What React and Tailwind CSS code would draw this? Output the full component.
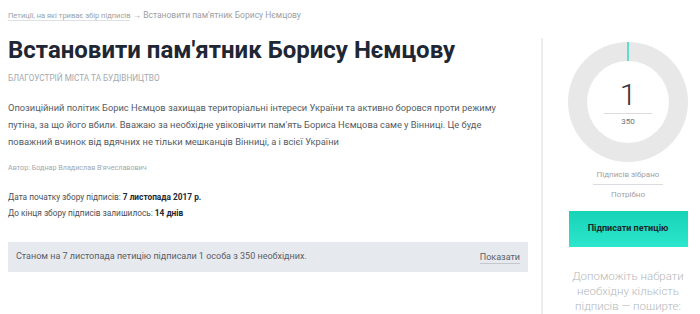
export default function App() {
  return (
    <div className="flex h-[314px] w-[700px] overflow-hidden bg-white font-['Roboto',sans-serif]">
      <main className="w-[541px] shrink-0 pl-2 pr-[4px]">
        <nav className="pt-[10px] text-[8px] leading-[11px] text-[#9aa0a6]">
          <span className="border-b border-[#dde0e4] text-[7.5px]">Петиції, на які триває збір підписів</span>
          <span className="text-[8.5px]"> → Встановити пам'ятник Борису Нємцову</span>
        </nav>

        <h1 className="mt-[14px] text-[24px] font-bold leading-[30px] text-[#1e2733]">
          Встановити пам'ятник Борису Нємцову
        </h1>

        <p className="mt-[8px] text-[8.2px] uppercase leading-[11px] text-[#a4a8ad]">
          Благоустрій міста та будівництво
        </p>

        <p className="mt-[15px] max-w-[515px] text-[9.3px] leading-[17px] text-[#555b62]">
          Опозиційний політик Борис Нємцов захищав територіальні інтереси України та активно боровся проти режиму
          путіна, за що його вбили. Вважаю за необхідне увіковічити пам'ять Бориса Нємцова саме у Вінниці. Це буде
          поважний вчинок від вдячних не тільки мешканців Вінниці, а і всієї України
        </p>

        <p className="mt-[13px] text-[7.2px] leading-[10px] text-[#a4a8ad]">Автор: Боднар Владислав В'ячеславович</p>

        <div className="mt-[16px] text-[8.3px] leading-[16px] text-[#4a5058]">
          <p>
            Дата початку збору підписів: <b className="text-[#1e2733]">7 листопада 2017 р.</b>
          </p>
          <p>
            До кінця збору підписів залишилось: <b className="text-[#1e2733]">14 днів</b>
          </p>
        </div>

        <div className="mt-[21px] flex h-[30px] w-[520px] items-center justify-between bg-[#e6e9ed] px-2 text-[9px] text-[#5a6068]">
          <span>Станом на 7 листопада петицію підписали 1 особа з 350 необхідних.</span>
          <span className="border-b border-[#c4c8cc] leading-[12px]">Показати</span>
        </div>
      </main>

      <aside className="mt-[38px] flex w-[159px] flex-col items-center border-l-2 border-[#ececec] pl-[25px] pr-[12px]">
        <div className="relative mt-[4px] h-[120px] w-[120px] shrink-0 rounded-full bg-[#e8e8e8]">
          <div className="absolute left-[59px] top-0 h-[19px] w-[2px] bg-[#5fdccb]" />
          <div className="absolute inset-[19px] flex flex-col items-center justify-center rounded-full bg-white pt-[2px]">
            <span className="text-[30px] font-light leading-[30px] text-[#2b323b]">1</span>
            <span className="mt-[3px] h-px w-[48px] bg-[#dcdcdc]" />
            <span className="mt-[3px] text-[8px] leading-[10px] text-[#6b7178]">350</span>
          </div>
        </div>

        <div className="mt-[8px] flex flex-col items-center text-[8px] leading-[10px] text-[#9da2a7]">
          <span className="border-b border-[#d9dce0] px-[4px] pb-[4px]">Підписів зібрано</span>
          <span className="mt-[5px]">Потрібно</span>
        </div>

        <button
          type="button"
          className="mt-[11px] h-[36px] w-[119px] shrink-0 bg-gradient-to-b from-[#16d3b6] to-[#2ce6cd] text-[9px] font-bold text-[#1a2a2a]"
        >
          Підписати петицію
        </button>

        <p className="mt-[22px] w-[140px] text-center text-[11.5px] font-light leading-[15px] text-[#b4b8bc]">
          Допоможіть набрати необхідну кількість підписів — поширте:
        </p>
      </aside>
    </div>
  )
}
